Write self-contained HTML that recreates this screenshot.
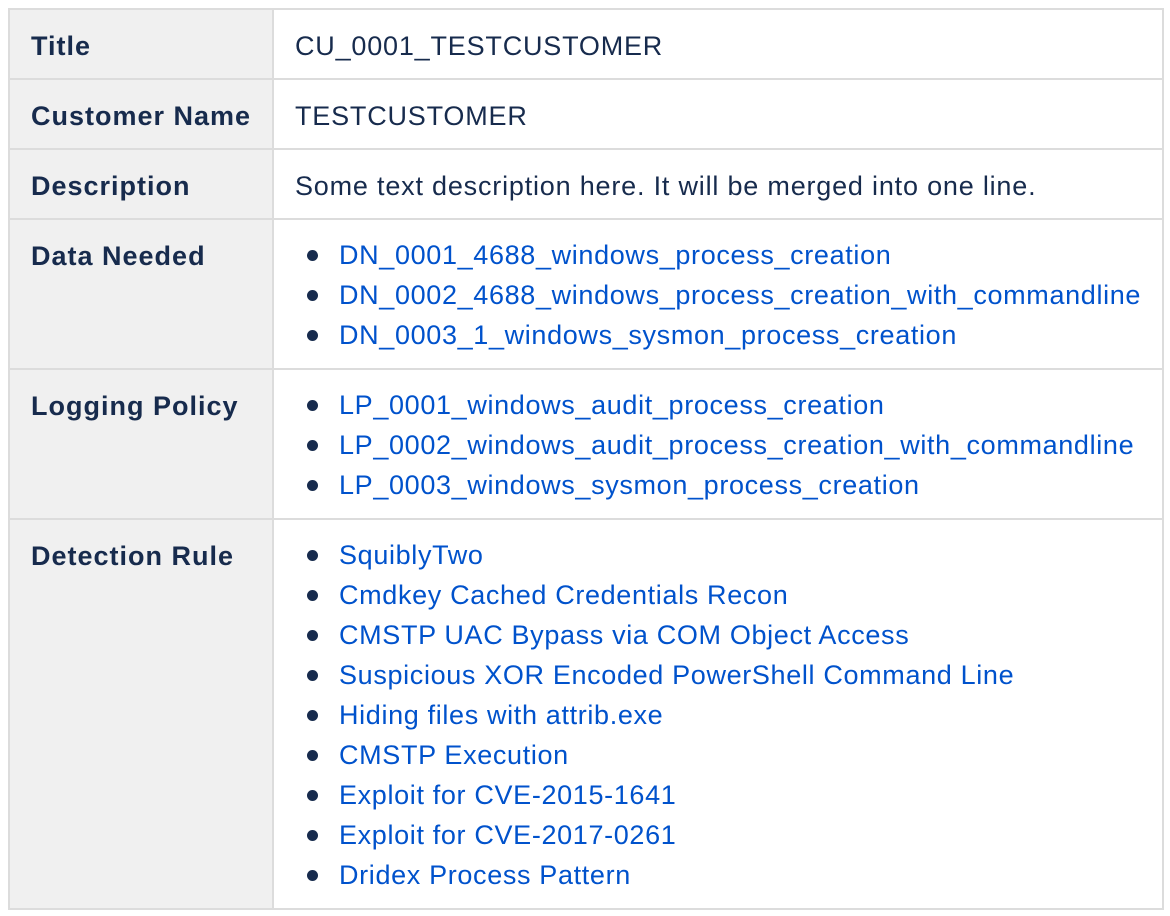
<!DOCTYPE html>
<html><head><style>
body{margin:0;background:#fff;width:1170px;height:916px;overflow:hidden;font-family:"Liberation Sans",Arial,sans-serif;font-size:27px;letter-spacing:0.8px;color:#172b4d}
.t{position:absolute;left:8px;top:8px;width:1152px;height:898px;border:2px solid #dcdcdc;box-sizing:content-box}
.row{position:absolute;left:0;width:1152px;border-bottom:2px solid #dcdcdc;box-sizing:border-box}
.h{position:absolute;left:0;top:0;bottom:0;width:264px;background:#f0f0f0;border-right:2px solid #dcdcdc;font-weight:bold;letter-spacing:1px;padding:19px 0 0 21px;box-sizing:border-box;line-height:34px}
.v{position:absolute;left:266px;top:0;padding:19px 0 0 19px;line-height:34px;white-space:nowrap}
ul{margin:0;padding:0 0 0 44px;list-style:none}
li{position:relative;line-height:40px;height:40px;color:#0052cc;letter-spacing:0.65px}
li:before{content:"";position:absolute;left:-32px;top:15px;width:11px;height:11px;border-radius:50%;background:#172b4d}
.v.l{padding-top:15px}
</style></head><body>
<div class="t">
<div class="row" style="top:0;height:70px"><div class="h">Title</div><div class="v">CU_0001_TESTCUSTOMER</div></div>
<div class="row" style="top:70px;height:70px"><div class="h">Customer Name</div><div class="v">TESTCUSTOMER</div></div>
<div class="row" style="top:140px;height:70px"><div class="h">Description</div><div class="v">Some text description here. It will be merged into one line.</div></div>
<div class="row" style="top:210px;height:150px"><div class="h">Data Needed</div><div class="v l"><ul>
<li>DN_0001_4688_windows_process_creation</li>
<li>DN_0002_4688_windows_process_creation_with_commandline</li>
<li>DN_0003_1_windows_sysmon_process_creation</li></ul></div></div>
<div class="row" style="top:360px;height:150px"><div class="h">Logging Policy</div><div class="v l"><ul>
<li>LP_0001_windows_audit_process_creation</li>
<li>LP_0002_windows_audit_process_creation_with_commandline</li>
<li>LP_0003_windows_sysmon_process_creation</li></ul></div></div>
<div class="row" style="top:510px;height:388px;border-bottom:none"><div class="h">Detection Rule</div><div class="v l"><ul>
<li>SquiblyTwo</li>
<li>Cmdkey Cached Credentials Recon</li>
<li>CMSTP UAC Bypass via COM Object Access</li>
<li>Suspicious XOR Encoded PowerShell Command Line</li>
<li>Hiding files with attrib.exe</li>
<li>CMSTP Execution</li>
<li>Exploit for CVE-2015-1641</li>
<li>Exploit for CVE-2017-0261</li>
<li>Dridex Process Pattern</li></ul></div></div>
</div>
</body></html>
